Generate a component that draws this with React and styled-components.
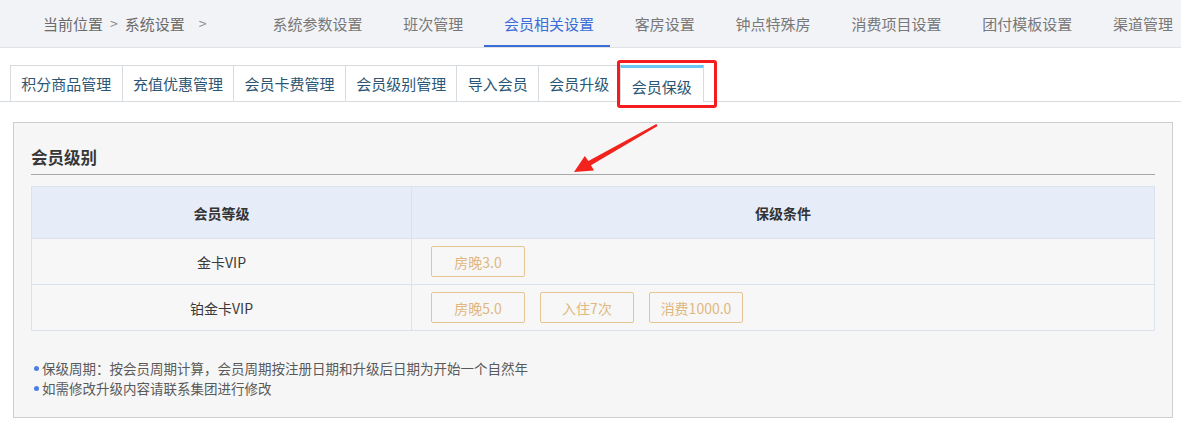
import React from 'react';
import styled, { createGlobalStyle } from 'styled-components';

const GlobalStyle = createGlobalStyle`
  html, body {
    margin: 0;
    padding: 0;
    background: #ffffff;
    font-family: "Noto Sans CJK SC", "Noto Sans", sans-serif;
  }
  * { box-sizing: border-box; }
`;

const navItems = ['系统参数设置', '班次管理', '会员相关设置', '客房设置', '钟点特殊房', '消费项目设置', '团付模板设置', '渠道管理'];
const subTabs = ['积分商品管理', '充值优惠管理', '会员卡费管理', '会员级别管理', '导入会员', '会员升级', '会员保级'];

const levels = [
  { name: '金卡VIP', conditions: ['房晚3.0'] },
  { name: '铂金卡VIP', conditions: ['房晚5.0', '入住7次', '消费1000.0'] },
];

const App = () => {
  return (
    <Page>
      <GlobalStyle />
      <TopNav>
        <Breadcrumb>
          <span>当前位置</span>
          <Sep>&gt;</Sep>
          <span>系统设置</span>
          <Sep $last>&gt;</Sep>
        </Breadcrumb>
        {navItems.map((item) => (
          <NavItem key={item} $active={item === '会员相关设置'}>{item}</NavItem>
        ))}
      </TopNav>

      <TabBar>
        {subTabs.map((tab) => (
          <Tab key={tab} $active={tab === '会员保级'}>
            {tab}
            {tab === '会员保级' && <Highlight />}
          </Tab>
        ))}
      </TabBar>

      <Panel>
        <SectionTitle>会员级别</SectionTitle>
        <LevelTable>
          <thead>
            <tr>
              <HeadCell $first>会员等级</HeadCell>
              <HeadCell>保级条件</HeadCell>
            </tr>
          </thead>
          <tbody>
            {levels.map((lv) => (
              <tr key={lv.name}>
                <NameCell>{lv.name}</NameCell>
                <CondCell>
                  <ChipRow>
                    {lv.conditions.map((c) => (
                      <Chip key={c}>{c}</Chip>
                    ))}
                  </ChipRow>
                </CondCell>
              </tr>
            ))}
          </tbody>
        </LevelTable>
        <Notes>
          <Note>保级周期：按会员周期计算，会员周期按注册日期和升级后日期为开始一个自然年</Note>
          <Note>如需修改升级内容请联系集团进行修改</Note>
        </Notes>
      </Panel>

      <Arrow viewBox="0 0 1181 439" width="1181" height="439">
        <polygon
          fill="#f2231d"
          points="657.6,126 591,165.2 594,170.6 574,172 584.8,156 588.4,161 656.4,124"
        />
      </Arrow>
    </Page>
  );
};

const Page = styled.div`
  position: relative;
  width: 1181px;
  height: 439px;
  overflow: hidden;
`;

const TopNav = styled.div`
  display: flex;
  align-items: stretch;
  height: 48px;
  background: #f2f3f7;
  border-bottom: 1px solid #e1e2e6;
  overflow: hidden;
`;

const Breadcrumb = styled.div`
  flex-shrink: 0;
  display: flex;
  align-items: center;
  width: 252px;
  padding-left: 43px;
  padding-bottom: 1px;
  font-size: 15px;
  color: #6b6b6b;
  white-space: nowrap;
`;

const Sep = styled.span`
  margin: ${(p) => (p.$last ? '0 0 0 14px' : '0 7px')};
  font-size: 14px;
  color: #888;
`;

const NavItem = styled.div`
  flex-shrink: 0;
  position: relative;
  display: flex;
  align-items: center;
  padding: 0 20.4px 1px;
  font-size: 15px;
  white-space: nowrap;
  color: ${(p) => (p.$active ? '#3b6dd7' : '#787878')};

  &::after {
    content: '';
    display: ${(p) => (p.$active ? 'block' : 'none')};
    position: absolute;
    left: 0;
    right: 4px;
    bottom: -1px;
    height: 3px;
    background: #3b6dd7;
  }
`;

const TabBar = styled.div`
  display: flex;
  align-items: flex-end;
  margin-top: 17px;
  padding-left: 10px;
  height: 37px;
  border-bottom: 1px solid #d6dbe0;
`;

const Tab = styled.div`
  position: relative;
  display: flex;
  align-items: center;
  height: ${(p) => (p.$active ? '37px' : '36px')};
  margin-bottom: ${(p) => (p.$active ? '-1px' : '0')};
  padding: ${(p) => (p.$active ? '2px 11px 0' : '0 10.3px')};
  background: #ffffff;
  border: 1px solid #d6dbe0;
  border-top: ${(p) => (p.$active ? '3px solid #6ac7f2' : '1px solid #d6dbe0')};
  border-right: ${(p) => (p.$active ? '1px solid #d6dbe0' : 'none')};
  border-bottom: none;
  font-size: 15px;
  color: #2b5674;
  white-space: nowrap;
`;

const Highlight = styled.span`
  position: absolute;
  left: -4px;
  top: -8px;
  width: 100px;
  height: 48px;
  border: 3px solid #f41c1c;
  border-radius: 3px;
  pointer-events: none;
`;

const Panel = styled.div`
  margin: 20px 8px 0 13px;
  height: 296px;
  padding: 0 17px;
  background: #f6f6f6;
  border: 1px solid #cecece;
`;

const SectionTitle = styled.h3`
  margin: 0;
  padding: 23px 0 6px;
  line-height: 22px;
  font-size: 16.5px;
  font-weight: bold;
  color: #383838;
  border-bottom: 1px solid #a8a8a8;
`;

const LevelTable = styled.table`
  width: 100%;
  margin-top: 11px;
  border-collapse: collapse;
  border: 1px solid #dbe2ee;
  font-size: 14px;
`;

const HeadCell = styled.th`
  width: ${(p) => (p.$first ? '380px' : 'auto')};
  height: 52px;
  padding: 0;
  background: #e6edf8;
  border: 1px solid #dbe2ee;
  font-weight: bold;
  color: #333333;
  text-align: center;
`;

const NameCell = styled.td`
  height: 46px;
  padding: 0;
  border: 1px solid #dbe2ee;
  background: #f7f7f7;
  color: #3a3a3a;
  text-align: center;
`;

const CondCell = styled.td`
  height: 46px;
  padding: 0 0 0 19px;
  border: 1px solid #dbe2ee;
  background: #f7f7f7;
`;

const ChipRow = styled.div`
  display: flex;
  gap: 15px;
`;

const Chip = styled.span`
  display: inline-flex;
  align-items: center;
  justify-content: center;
  width: 94px;
  height: 31px;
  border: 1px solid #e5c591;
  border-radius: 2px;
  color: #e0b87f;
  font-size: 14px;
`;

const Notes = styled.ul`
  list-style: none;
  margin: 27px 0 0;
  padding: 0 0 0 3px;
`;

const Note = styled.li`
  display: flex;
  align-items: center;
  line-height: 20px;
  font-size: 13.5px;
  color: #5a5a5a;

  &::before {
    content: '';
    width: 5px;
    height: 5px;
    margin-right: 3px;
    border-radius: 50%;
    background: #4b7fe2;
    flex-shrink: 0;
  }
`;

const Arrow = styled.svg`
  position: absolute;
  left: 0;
  top: 0;
  pointer-events: none;
`;

export default App;
